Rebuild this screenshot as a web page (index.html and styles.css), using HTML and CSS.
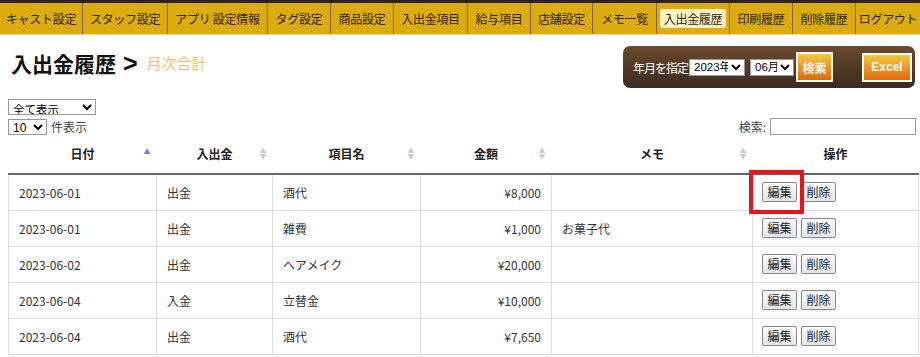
FILE: index.html
```html
<!DOCTYPE html>
<html lang="ja">
<head>
<meta charset="utf-8">
<link rel="stylesheet" href="styles.css">
</head>
<body>
<div class="topline"></div>
<nav class="nav">
  <a class="nav-item">キャスト設定</a>
  <a class="nav-item">スタッフ設定</a>
  <a class="nav-item">アプリ 設定情報</a>
  <a class="nav-item">タグ設定</a>
  <a class="nav-item">商品設定</a>
  <a class="nav-item">入出金項目</a>
  <a class="nav-item">給与項目</a>
  <a class="nav-item">店舗設定</a>
  <a class="nav-item">メモ一覧</a>
  <a class="nav-item"><span class="active">入出金履歴</span></a>
  <a class="nav-item">印刷履歴</a>
  <a class="nav-item">削除履歴</a>
  <a class="nav-item last">ログアウト</a>
</nav>
<div class="head">
  <h1 class="title">入出金履歴<span class="gt">&gt;</span><span class="sub">月次合計</span></h1>
  <div class="panel">
    <span class="panel-label">年月を指定</span>
    <select class="sel sel-year"><option>2023年</option></select>
    <select class="sel sel-month"><option>06月</option></select>
    <button class="obtn obtn-search">検索</button>
    <button class="obtn obtn-excel">Excel</button>
  </div>
</div>
<div class="controls">
  <div class="left-ctrls">
    <select class="sel-all"><option>全て表示</option></select>
    <div class="len"><select class="sel-len"><option>10</option></select><span>件表示</span></div>
  </div>
  <label class="search">検索: <input class="search-input" type="text"></label>
</div>
<div class="table-wrap">
<table class="tbl">
  <colgroup>
    <col class="c1"><col class="c2"><col class="c3"><col class="c4"><col class="c5"><col class="c6">
  </colgroup>
  <thead>
    <tr>
      <th class="sort-asc">日付</th>
      <th class="sortable">入出金</th>
      <th class="sortable">項目名</th>
      <th class="sortable">金額</th>
      <th class="sortable">メモ</th>
      <th>操作</th>
    </tr>
  </thead>
  <tbody>
    <tr><td>2023-06-01</td><td>出金</td><td>酒代</td><td class="num">¥8,000</td><td></td><td class="ops"><button class="sbtn">編集</button><button class="sbtn">削除</button><span class="mark"></span></td></tr>
    <tr><td>2023-06-01</td><td>出金</td><td>雑費</td><td class="num">¥1,000</td><td>お菓子代</td><td class="ops"><button class="sbtn">編集</button><button class="sbtn">削除</button></td></tr>
    <tr><td>2023-06-02</td><td>出金</td><td>ヘアメイク</td><td class="num">¥20,000</td><td></td><td class="ops"><button class="sbtn">編集</button><button class="sbtn">削除</button></td></tr>
    <tr><td>2023-06-04</td><td>入金</td><td>立替金</td><td class="num">¥10,000</td><td></td><td class="ops"><button class="sbtn">編集</button><button class="sbtn">削除</button></td></tr>
    <tr><td>2023-06-04</td><td>出金</td><td>酒代</td><td class="num">¥7,650</td><td></td><td class="ops"><button class="sbtn">編集</button><button class="sbtn">削除</button></td></tr>
  </tbody>
</table>
</div>
</body>
</html>
```
FILE: styles.css
```css
* { box-sizing: border-box; }
html, body { margin: 0; padding: 0; background: #fff; }
body {
  font-family: "Noto Sans CJK JP", "Noto Sans", sans-serif;
  font-size: 12px;
  color: #333;
  width: 920px;
  height: 357px;
  overflow: hidden;
}
.topline { height: 3px; background: #2b2218; }
.nav {
  display: grid;
  grid-template-columns: 83px 85px 100px 63px 63px 74px 63px 62px 64px 73px 63px 63px 1fr;
  height: 32px;
  background: #dcab10;
  border-bottom: 1px solid #f1d98a;
}
.nav-item {
  display: flex;
  align-items: center;
  justify-content: center;
  border-right: 1px solid #7d6620;
  color: #2c2516;
  font-size: 12px;
  white-space: nowrap;
  letter-spacing: -0.3px;
}
.nav-item.last { border-right: none; }
.active {
  background: #fdf1c4;
  border-radius: 3px;
  padding: 1px 4px;
}
.head {
  display: flex;
  justify-content: space-between;
  align-items: flex-start;
  padding: 11px 5px 0 11px;
}
.title {
  margin: 4px 0 0 0;
  font-size: 21px;
  font-weight: bold;
  color: #111;
  line-height: 26px;
  display: flex;
  align-items: center;
}
.gt {
  font-family: "Liberation Sans", sans-serif;
  font-size: 25px;
  margin-left: 7px;
}
.sub {
  font-size: 15px;
  font-weight: normal;
  color: #f7bd6a;
  margin-left: 9px;
}
.panel {
  width: 292px;
  height: 42px;
  border-radius: 7px;
  background: linear-gradient(#6a4a2d, #3b2b1f);
  display: flex;
  align-items: center;
  padding: 0 3px 0 10px;
}
.panel-label { color: #fff; font-size: 12px; letter-spacing: -1px; margin-right: 1px; }
.sel {
  font-family: "Liberation Sans", "Noto Sans CJK JP", sans-serif;
  font-size: 11.5px;
  height: 17px;
  padding: 0;
  border: 1px solid #999;
  background: #fff;
  color: #000;
}
.sel-year { width: 56px; }
.sel-month { width: 44px; margin-left: 5px; }
.obtn {
  font-family: "Liberation Sans", "Noto Sans CJK JP", sans-serif;
  color: #fff;
  font-size: 12px;
  font-weight: bold;
  border: 2px solid #fff;
  background: linear-gradient(#f6c640, #e06a0c);
  padding: 0;
}
.obtn-search { width: 37px; height: 30px; margin-left: 2px; }
.obtn-excel { width: 50px; height: 29px; margin-left: auto; }
.controls {
  display: flex;
  justify-content: space-between;
  align-items: flex-end;
  padding: 11px 4px 0 8px;
}
.left-ctrls { display: flex; flex-direction: column; gap: 3px; }
.sel-all {
  width: 88px; height: 16px; font-size: 11.5px; padding: 0;
  border: 1px solid #999; background: #fff; color: #000;
  font-family: "Noto Sans CJK JP", sans-serif;
}
.len { display: flex; align-items: center; gap: 4px; color: #444; }
.sel-len {
  width: 39px; height: 16px; font-size: 12px; padding: 0;
  border: 1px solid #999; background: #fff; color: #000;
  font-family: "Liberation Sans", sans-serif;
}
.search { color: #444; font-size: 12px; display: flex; align-items: center; gap: 4px; }
.search-input { width: 146px; height: 17px; border: 1px solid #999; padding: 0; }
.table-wrap { padding: 5px 0 0 8px; }
.tbl {
  border-collapse: collapse;
  table-layout: fixed;
  width: 910px;
}
.c1 { width: 148px; } .c2 { width: 116px; } .c3 { width: 148px; }
.c4 { width: 131px; } .c5 { width: 201px; } .c6 { width: 166px; }
.tbl th {
  height: 34px;
  font-weight: bold;
  font-size: 12px;
  color: #222;
  text-align: center;
  border-bottom: 2px solid #666;
  position: relative;
  padding: 0 0 7px 0;
}
.tbl th.sortable::after,
.tbl th.sort-asc::after {
  position: absolute;
  right: 6px;
  top: 7px;
  font-size: 7px;
  line-height: 6px;
  color: #ccc;
  content: "▲\A▼";
  white-space: pre;
}
.tbl th.sort-asc::after { content: "▲"; color: #7a7acc; top: 8px; }
.tbl td {
  height: 36px;
  border: 1px solid #ddd;
  padding: 0 10px;
  font-size: 12px;
  color: #333;
  white-space: nowrap;
}
.tbl td.num { text-align: right; }
.tbl td.ops { position: relative; padding-left: 9px; }
.sbtn {
  font-family: "Noto Sans CJK JP", sans-serif;
  font-size: 12px;
  color: #222;
  height: 20px;
  width: 35px;
  padding: 0;
  margin-right: 4px;
  border: 1px solid #888;
  border-radius: 2px;
  background: linear-gradient(#fafafa, #e6e6e6);
  line-height: 16px;
}
.mark {
  position: absolute;
  left: -4px;
  top: -5px;
  width: 55px;
  height: 44px;
  border: 4px solid #e8141c;
}
```
